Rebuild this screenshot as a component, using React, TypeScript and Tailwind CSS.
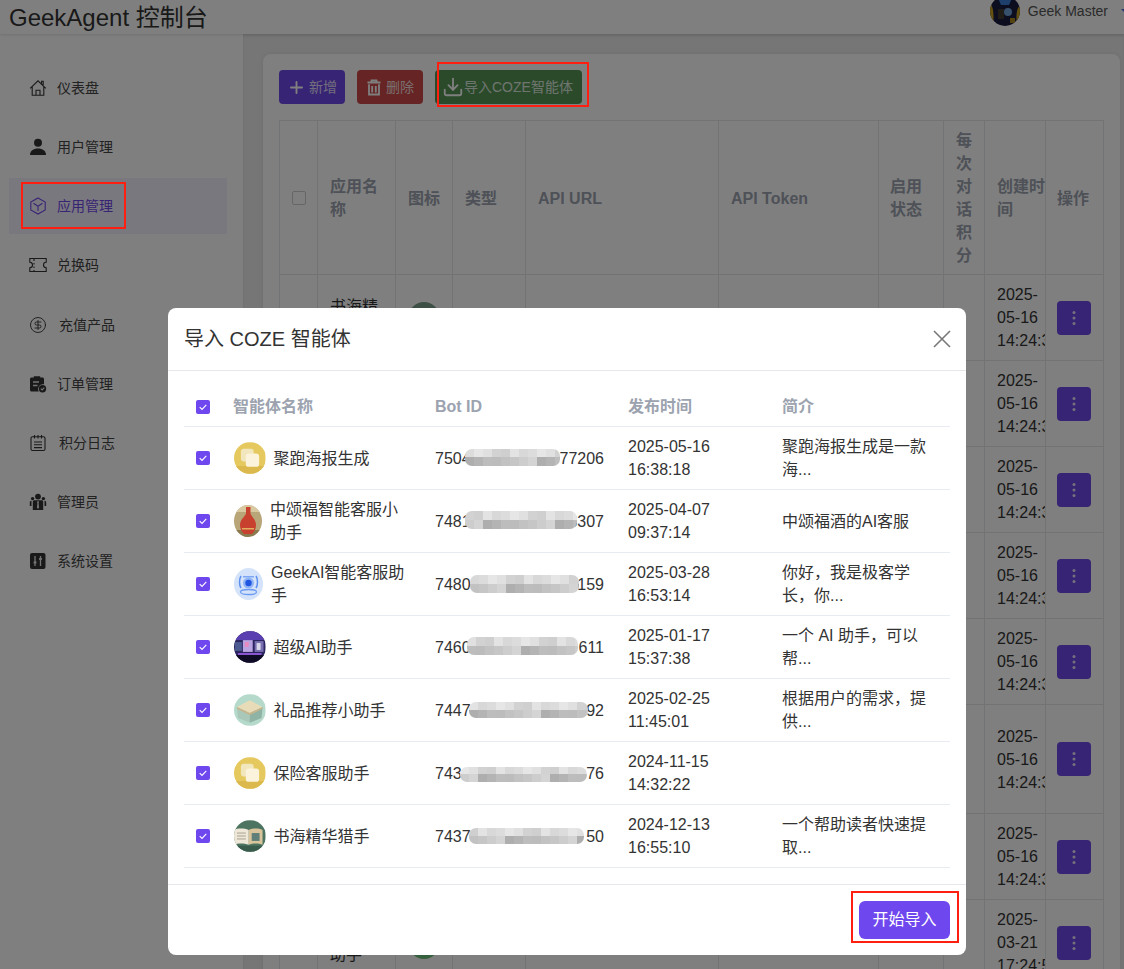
import React from "react";
import { CircleDollarSign, Download, Plus } from "lucide-react";

const V = "w-[18px] h-[18px]";

const HomeI = () => (
  <svg viewBox="0 0 18 18" className={V} fill="none" stroke="currentColor" strokeWidth="1.1">
    <path d="M1.2 9.3 9 1.8l7.8 7.5M3.2 7.8v8.4h11.6V7.8M7 16.2v-5h4v5M12.6 4.4V2.2h1.6v3.7" />
  </svg>
);
const UserI = () => (
  <svg viewBox="0 0 18 18" className={V} fill="currentColor">
    <circle cx="9" cy="4.8" r="4" />
    <path d="M1 17c0-4.4 3.4-6.6 8-6.6s8 2.200 8 6.600z" />
  </svg>
);
const CubeI = () => (
  <svg viewBox="0 0 18 18" className={V} fill="none" stroke="#7048e8" strokeWidth="1.1">
    <path d="M9 1 16.200 5v8L9 17l-7.200-4V5zM4.500 6.300 9 9.300l4.500-3M9 9.300V14" />
  </svg>
);
const TicketI = () => (
  <svg viewBox="0 0 18 18" className={V} fill="none" stroke="currentColor" strokeWidth="1.1">
    <path d="M.8 2.500h16.400v3.800a2.700 2.700 0 0 0 0 5.400v3.800H.8v-3.800a2.700 2.700 0 0 0 0-5.400z" />
    <path d="M5 3v2M5 7v1.500M5 10.500V12M5 14v1.500" />
  </svg>
);
const OrderI = () => (
  <svg viewBox="0 0 18 18" className={V} fill="currentColor">
    <path d="M2.500 2.500h2.300V1.200h6.400v1.300h2.300c.800 0 1.500.700 1.500 1.500v5.300a4.800 4.800 0 0 0-5.200 7.200H2.500c-.800 0-1.500-.700-1.500-1.500V4c0-.800.700-1.500 1.500-1.500z" />
    <path d="M4 7h6M4 10.500h4.500" stroke="#e8e8e8" strokeWidth="1.300" />
    <circle cx="13.500" cy="13.700" r="3.700" />
    <path d="m11.800 13.700 1.300 1.300 2.200-2.300" fill="none" stroke="#e8e8e8" strokeWidth="1.100" />
  </svg>
);
const NotesI = () => (
  <svg viewBox="0 0 18 18" className={V} fill="none" stroke="currentColor" strokeWidth="1.100">
    <rect x="2" y="2.800" width="14" height="13.700" rx="1.500" />
    <path d="M5.500 1v3.500M9 1v3.500M12.500 1v3.500M5 8h8M5 10.800h8M5 13.600h8" />
  </svg>
);
const AdminI = () => (
  <svg viewBox="0 0 18 18" className={V} fill="currentColor">
    <circle cx="9" cy="3.600" r="2.900" />
    <circle cx="3.600" cy="5.600" r="1.700" />
    <circle cx="14.400" cy="5.600" r="1.700" />
    <path d="M5.300 7.200h7.400c.900 0 1.500.700 1.500 1.500v8.300H3.800V8.700c0-.800.600-1.500 1.500-1.500z" />
    <path d="M.8 13V9.400c0-1 .800-1.700 1.700-1.700v5.300zM17.200 13V9.400c0-1-.800-1.700-1.700-1.700v5.300z" />
    <path d="M9 7.600 8 9.200l.400 1-.500 4.300L9 16l1.100-1.500-.500-4.300.400-1z" fill="#e8e8e8" />
  </svg>
);
const SetI = () => (
  <svg viewBox="0 0 18 18" className={V}>
    <rect x="1" y="1" width="15.500" height="16" rx="2" fill="currentColor" />
    <path d="M6 4v10M11.500 4v10" stroke="#e8e8e8" strokeWidth="1.300" />
    <path d="M4.600 10.500h2.800M10.100 7h2.800" stroke="#e8e8e8" strokeWidth="1.800" />
  </svg>
);

const nav = [
  { t: "仪表盘", i: <HomeI /> },
  { t: "用户管理", i: <UserI /> },
  { t: "应用管理", i: <CubeI />, a: true },
  { t: "兑换码", i: <TicketI /> },
  { t: "充值产品", i: <CircleDollarSign size={18} strokeWidth={1.2} />, s: true },
  { t: "订单管理", i: <OrderI /> },
  { t: "积分日志", i: <NotesI />, s: true },
  { t: "管理员", i: <AdminI /> },
  { t: "系统设置", i: <SetI /> },
];

const bgRows = [
  { n: "书海精华猎手", d: "2025-05-16 14:24:30", c: "bg-[#7da08c]", h: "h-[86px]" },
  { n: "", d: "2025-05-16 14:24:30", c: "", h: "h-[86px]" },
  { n: "", d: "2025-05-16 14:24:30", c: "", h: "h-[86px]" },
  { n: "", d: "2025-05-16 14:24:30", c: "", h: "h-[86px]" },
  { n: "", d: "2025-05-16 14:24:30", c: "", h: "h-[86px]" },
  { n: "", d: "2025-05-16 14:24:30", c: "", h: "h-[109px]" },
  { n: "", d: "2025-05-16 14:24:30", c: "", h: "h-[86px]" },
  { n: "超级AI助手", d: "2025-03-21 17:24:50", c: "bg-[#6fc27c]", h: "h-[86px]" },
];

const Check = () => (
  <div className="flex h-[14px] w-[14px] items-center justify-center rounded-[2px] bg-[#6f47ee]">
    <svg viewBox="0 0 14 14" className="h-[14px] w-[14px]" fill="none" stroke="#fff" strokeWidth="1.100">
      <path d="m3.700 7.200 2.300 2.200 4.300-4.600" />
    </svg>
  </div>
);

const Cream = () => (
  <svg viewBox="0 0 32 32" className="h-8 w-[31.5px] shrink-0 rounded-full">
    <rect width="32" height="32" fill="#e5c95f" />
    <path d="M0 24h32v8H0z" fill="#dcb94c" />
    <rect x="7" y="6.500" width="13" height="13" rx="3" fill="#f2e6bd" />
    <rect x="12" y="11.500" width="13.500" height="13.500" rx="3" fill="#fbf3dc" />
  </svg>
);
const Bottle = () => (
  <svg viewBox="0 0 28 32" className="h-8 w-7 shrink-0 rounded-[50%]">
    <rect width="28" height="32" fill="#b8a578" />
    <path d="M0 0h28v7H0z" fill="#d8c9a0" />
    <path d="M0 25h28v7H0z" fill="#8a7a50" />
    <path d="M12 2h4.500v6c0 3 5.500 6 5.500 12 0 4-2 7-4 9h-8c-2-2-4-5-4-9 0-6 6-9 6-12z" fill="#c8412e" />
    <path d="M8 23h12v1.500H8z" fill="#e0b060" />
  </svg>
);
const Robot = () => (
  <svg viewBox="0 0 29 32" className="h-8 w-[29px] shrink-0 rounded-[50%]">
    <rect width="29" height="32" fill="#d4e3fa" />
    <path d="M7 8c-2 3-2 9 0 12M22 8c2 3 2 9 0 12" stroke="#5d8ff0" strokeWidth="1.500" fill="none" />
    <ellipse cx="14.500" cy="24" rx="8" ry="2.500" fill="none" stroke="#6b9bf2" strokeWidth="1.300" />
    <circle cx="14.500" cy="15" r="5.500" fill="#8fb3f5" />
    <circle cx="14.500" cy="15" r="3.200" fill="#1f55e0" />
    <path d="M9 8h11v1.500H9z" fill="#7da6f3" />
  </svg>
);
const Desk = () => (
  <svg viewBox="0 0 32 32" className="h-8 w-[31.5px] shrink-0 rounded-full">
    <rect width="32" height="32" fill="#2b2560" />
    <path d="M0 0h32v9H0z" fill="#5a3fb0" />
    <rect x="9" y="9" width="10" height="12" fill="#b9a3e0" />
    <rect x="11" y="11" width="4" height="5" fill="#e88ac0" />
    <rect x="1" y="11" width="7" height="9" fill="#4b5a90" />
    <rect x="21" y="10" width="9" height="11" fill="#7a6fb0" />
    <rect x="23" y="12" width="4" height="7" fill="#d8d8e8" />
    <path d="M0 24h32v8H0z" fill="#0e0c24" />
    <path d="M4 22h24v2H4z" fill="#8a55d0" />
  </svg>
);
const Gift = () => (
  <svg viewBox="0 0 32 32" className="h-8 w-[31.5px] shrink-0 rounded-full">
    <rect width="32" height="32" fill="#b5dacb" />
    <path d="M3 13 16 19v10L4 24z" fill="#a9c8ba" />
    <path d="M29 13 16 19v10l12-5z" fill="#8fb3a5" />
    <path d="M16 6 29 13l-13 6L3 13z" fill="#e8dcb8" />
    <path d="M3 13 16 19l13-6v1.800L16 21 3 14.800z" fill="#c8b48a" />
  </svg>
);
const Book = () => (
  <svg viewBox="0 0 32 32" className="h-8 w-[31.5px] shrink-0 rounded-full">
    <rect width="32" height="32" fill="#4c7461" />
    <path d="M0 26h32v6H0z" fill="#3a5c4c" />
    <path d="M0 10c4-2 10-2 15 0v15c-5-2-11-2-15 0z" fill="#efe8d8" />
    <path d="M15 10c4-2 10-2 14 0v15c-4-2-10-2-14 0z" fill="#d9c49c" />
    <rect x="18" y="13" width="8" height="8" fill="#5f7f78" />
    <path d="M3 13h9M3 16h9M3 19h9" stroke="#a89f90" />
  </svg>
);

const greys = ["#dcdcdc", "#e3e3e3", "#d2d2d2", "#e6e6e6", "#d8d8d8", "#cfcfcf", "#e0e0e0"];
const darks = ["#bdbdbd", "#c6c6c6", "#aeaeae", "#bcbcbc", "#cdcdcd", "#b4b4b4", "#c2c2c2", "#d4d4d4"];

const Mosaic = ({ x, y, w, h, seed }: { x: number; y: number; w: number; h: number; seed: number }) => {
  const n = Math.ceil(w / 9);
  const row = (arr: string[], k: number) =>
    Array.from({ length: n }).map((_, i) => (
      <span key={i} className="h-full w-[9px] shrink-0" style={{ background: arr[(i * 3 + seed + k) % arr.length] }} />
    ));
  return (
    <div
      className="absolute flex flex-col overflow-hidden rounded-[7px]"
      style={{ left: x, top: y, width: w, height: h }}
    >
      <div className="flex h-1/2">{row(greys, 0)}</div>
      <div className="flex h-1/2">{row(darks, 2)}</div>
    </div>
  );
};

const bots = [
  { n: "聚跑海报生成", a: <Cream />, l: "7504", r: "77206", m: [30, 2, 95, 17], d: "2025-05-16 16:38:18", b: "聚跑海报生成是一款海..." },
  { n: "中颂福智能客服小助手", a: <Bottle />, l: "7481", r: "8307", m: [30, 1, 112, 18], d: "2025-04-07 09:37:14", b: "中颂福酒的AI客服" },
  { n: "GeekAI智能客服助手", a: <Robot />, l: "7480", r: "159", m: [35, 2, 109, 18], d: "2025-03-28 16:53:14", b: "你好，我是极客学长，你..." },
  { n: "超级AI助手", a: <Desk />, l: "7460", r: "611", m: [32, 1, 111, 18], d: "2025-01-17 15:37:38", b: "一个 AI 助手，可以帮..." },
  { n: "礼品推荐小助手", a: <Gift />, l: "7447", r: "792", m: [34, 3, 119, 16], d: "2025-02-25 11:45:01", b: "根据用户的需求，提供..." },
  { n: "保险客服助手", a: <Cream />, l: "743", r: "76", m: [25, 5, 127, 15], d: "2024-11-15 14:32:22", b: "" },
  { n: "书海精华猎手", a: <Book />, l: "7437", r: "50", m: [34, 3, 115, 16], d: "2024-12-13 16:55:10", b: "一个帮助读者快速提取..." },
];

const thBg = "border border-[#e5e7eb] px-3 pt-2 pb-[7px] text-left font-bold text-[#9ca3af]";
const tdBg = "border border-[#e5e7eb] px-3 py-2";

export default function App() {
  return (
    <div className="relative flex h-[969px] w-[1124px] flex-col overflow-hidden bg-white font-['Liberation_Sans','Noto_Sans_CJK_SC',sans-serif] text-[#333]">
      <header className="relative z-10 flex h-[34px] shrink-0 items-center justify-between bg-white pl-[9px] shadow-[0_1px_3px_rgba(0,0,0,0.12)]">
        <div className="mt-[1px] text-2xl leading-8">GeekAgent 控制台</div>
        <div className="-mt-3 flex items-center text-sm text-[#555]">
          <svg viewBox="0 0 30 30" className="mr-2 h-[30px] w-[30px] rounded-full">
            <rect width="30" height="30" fill="#1a1a40" />
            <path d="M0 8c4 2 4 14 3 22H0zM30 10c-4 2-4 12-3 20h3z" fill="#c9a020" />
            <path d="M8 2h14l-3 7h-8z" fill="#3d7ed8" />
            <circle cx="18" cy="16" r="4" fill="#6fa0d8" />
            <path d="M8 13h6v10H8z" fill="#403a30" />
            <path d="M20 22h5v5h-5z" fill="#a8861c" />
          </svg>
          <span>Geek Master</span>
          <span className="-mr-[5px] ml-[13px] h-0 w-0 border-x-[4px] border-t-[4px] border-x-transparent border-t-[#4a6fe0]" />
        </div>
      </header>

      <div className="flex min-h-0 flex-1">
        <aside className="w-[243px] shrink-0 bg-white pl-[9px] pt-[26px]">
          <nav className="flex w-[218px] flex-col gap-[3.15px]">
            {nav.map((it) => (
              <div
                key={it.t}
                className={`flex h-14 items-center gap-[10px] pl-5 text-sm ${it.a ? "bg-[#f5f0ff] text-[#7048e8]" : "text-[#444]"}`}
              >
                <span className={`flex shrink-0 ${it.a ? "" : "text-[#333]"}`}>{it.i}</span>
                <span className={it.s ? "ml-[2px]" : ""}>{it.t}</span>
              </div>
            ))}
          </nav>
        </aside>

        <main className="min-w-0 flex-1 bg-[#ececec] pl-5 pr-1 pt-5 shadow-[inset_0_2px_3px_rgba(0,0,0,0.06)]">
          <div className="h-[1000px] rounded-lg bg-white p-4 shadow-[0_0_4px_rgba(0,0,0,0.08)]">
            <div className="flex gap-3 text-sm text-white">
              <button className="flex h-[34px] w-[66px] items-center gap-[3px] rounded bg-[#7048e8] pl-2">
                <Plus size={19} strokeWidth={2.400} />
                <span className="opacity-80">新增</span>
              </button>
              <button className="flex h-[34px] w-[66px] items-center gap-[3px] rounded bg-[#cc4848] pl-[8px]">
                <svg viewBox="0 0 18 18" className={V} fill="none" stroke="currentColor" strokeWidth="1.800">
                  <path d="M2.500 4.500h13M6.500 4.200V2.300h5v1.900M4 6.200v10.300h10V6.200M7.200 8v6.500M10.800 8v6.500" />
                </svg>
                <span className="opacity-80">删除</span>
              </button>
              <button className="flex h-[34px] w-[147px] items-center rounded bg-[#549455] pl-[7px]">
                <Download size={22} strokeWidth={2} />
                <span className="opacity-80">导入COZE智能体</span>
              </button>
            </div>

            <table className="mt-4 w-[824px] table-fixed border-collapse text-base leading-[23px]">
              <colgroup>
                <col className="w-[38px]" />
                <col className="w-[78px]" />
                <col className="w-[57px]" />
                <col className="w-[73px]" />
                <col className="w-[193px]" />
                <col className="w-[160px]" />
                <col className="w-[65px]" />
                <col className="w-[41px]" />
                <col className="w-[61px]" />
                <col className="w-[58px]" />
              </colgroup>
              <thead>
                <tr>
                  <th className="border border-[#e5e7eb] px-0 py-[7px]">
                    <span className="mx-auto block h-[14px] w-[14px] rounded-[2px] border border-[#ccc]" />
                  </th>
                  <th className={thBg}>应用名称</th>
                  <th className={thBg}>图标</th>
                  <th className={thBg}>类型</th>
                  <th className={thBg}>API URL</th>
                  <th className={thBg}>API Token</th>
                  <th className={`${thBg} pl-[11px]`}>启用状态</th>
                  <th className={thBg}>每次对话积分</th>
                  <th className={`${thBg} pr-0`}>创建时间</th>
                  <th className="border-y border-r border-[#e5e7eb] pb-[7px] pl-[11px] pr-3 pt-2 text-left font-bold text-[#9ca3af]">操作</th>
                </tr>
              </thead>
              <tbody>
                {bgRows.map((r, i) => (
                  <tr key={i} className={r.h}>
                    <td className={tdBg} />
                    <td className={tdBg}>{r.n}</td>
                    <td className={`${tdBg} px-0`}>
                      {r.c ? <span className={`mx-auto block h-8 w-8 rounded-full ${r.c}`} /> : null}
                    </td>
                    <td className={tdBg} />
                    <td className={tdBg} />
                    <td className={tdBg} />
                    <td className={tdBg} />
                    <td className={tdBg} />
                    <td className={`${tdBg} overflow-hidden pr-0`}>{r.d}</td>
                    <td className="border-y border-r border-[#e5e7eb] py-2 pl-[11px] pr-3">
                      <span className="flex h-[34px] w-[34px] items-center justify-center rounded bg-[#7048e8]">
                        <svg viewBox="0 0 4 16" className="h-4 w-1" fill="#fff" opacity="0.85">
                          <circle cx="2" cy="2.500" r="1.500" />
                          <circle cx="2" cy="8" r="1.500" />
                          <circle cx="2" cy="13.500" r="1.500" />
                        </svg>
                      </span>
                    </td>
                  </tr>
                ))}
              </tbody>
            </table>
          </div>
        </main>
      </div>

      {/* dim layer */}
      <div className="absolute inset-0 z-20 bg-black/50" />

      {/* dialog */}
      <div className="absolute left-[168px] top-[308px] z-30 flex h-[647px] w-[798px] flex-col rounded-lg bg-white">
        <div className="flex h-[63px] shrink-0 items-center justify-between border-b border-[#e5e7eb] pl-4 pr-[15px]">
          <h2 className="text-xl text-[#333]">导入 COZE 智能体</h2>
          <svg viewBox="0 0 18 18" className="h-[18px] w-[18px]" fill="none" stroke="#777" strokeWidth="1.600">
            <path d="m1 1 16 16M17 1 1 17" />
          </svg>
        </div>
        <div className="min-h-0 flex-1 px-4 py-4">
          <table className="w-[766px] table-fixed border-collapse text-base leading-[23px] text-[#333]">
            <colgroup>
              <col className="w-[37px]" />
              <col className="w-[202px]" />
              <col className="w-[193px]" />
              <col className="w-[154px]" />
              <col className="w-[180px]" />
            </colgroup>
            <thead>
              <tr className="border-b border-[#e9ebf2] text-left text-[#9ca3af]">
                <th className="py-2 pl-3 pr-0 font-normal"><Check /></th>
                <th className="px-3 py-2 font-bold">智能体名称</th>
                <th className="px-3 py-2 font-bold">Bot ID</th>
                <th className="px-3 py-2 font-bold">发布时间</th>
                <th className="px-3 py-2 font-bold">简介</th>
              </tr>
            </thead>
            <tbody>
              {bots.map((b, i) => (
                <tr key={b.n} className="h-[63px] border-b border-[#e9ebf2]">
                  <td className="py-2 pl-3 pr-0"><Check /></td>
                  <td className="px-3 py-2">
                    <div className="flex items-center gap-2 pl-px">
                      {b.a}
                      <span>{b.n}</span>
                    </div>
                  </td>
                  <td className="px-3 py-2">
                    <div className="relative flex w-[169px] justify-between">
                      <span>{b.l}</span>
                      <span>{b.r}</span>
                      <Mosaic x={b.m[0]} y={b.m[1]} w={b.m[2]} h={b.m[3]} seed={i * 2} />
                    </div>
                  </td>
                  <td className="px-3 py-2">{b.d}</td>
                  <td className="px-3 py-2">{b.b}</td>
                </tr>
              ))}
            </tbody>
          </table>
        </div>
        <div className="flex h-[71px] shrink-0 items-center justify-end border-t border-[#e5e7eb] pr-4">
          <button className="h-[38px] w-[91px] rounded-md bg-[#6f47ee] text-base text-white">开始导入</button>
        </div>
      </div>

      {/* red annotation boxes */}
      <div className="absolute left-[21px] top-[182px] z-40 h-[47px] w-[105px] border-2 border-[#ff1f10]" />
      <div className="absolute left-[437px] top-[62px] z-40 h-[45px] w-[152px] border-2 border-[#ff1f10]" />
      <div className="absolute left-[851px] top-[891px] z-40 h-[52px] w-[108px] border-2 border-[#ff1f10]" />
    </div>
  );
}
